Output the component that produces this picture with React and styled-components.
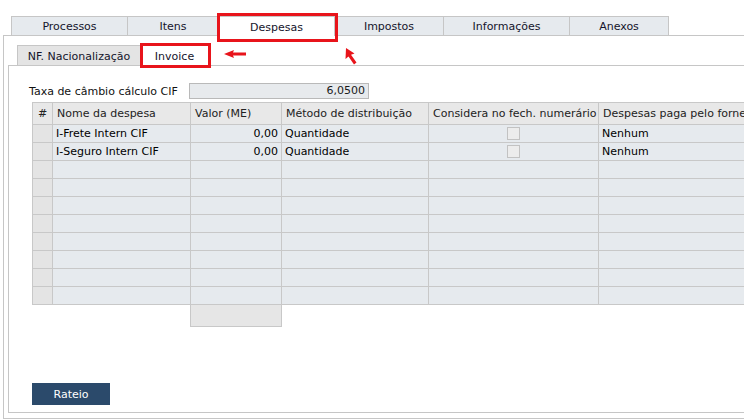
import React from "react";
import styled, { createGlobalStyle } from "styled-components";

const GlobalStyle = createGlobalStyle`
  html, body {
    margin: 0;
    padding: 0;
    background: #ffffff;
  }
  body {
    font-family: "DejaVu Sans", Verdana, sans-serif;
    font-size: 11px;
    color: #1a1a1a;
  }
`;

const MAIN_TABS = [
  { title: "Processos", width: 117 },
  { title: "Itens", width: 91 },
  { title: "Despesas", width: 116, active: true, marked: true },
  { title: "Impostos", width: 109 },
  { title: "Informações", width: 126 },
  { title: "Anexos", width: 99 },
];

const SUB_TABS = [
  { title: "NF. Nacionalização", width: 124 },
  { title: "Invoice", width: 68, active: true, marked: true },
];

const COLUMNS = [
  { key: "idx", title: "#", width: 20 },
  { key: "name", title: "Nome da despesa", width: 138 },
  { key: "value", title: "Valor (ME)", width: 91 },
  { key: "method", title: "Método de distribuição", width: 147 },
  { key: "check", title: "Considera no fech. numerário", width: 170 },
  { key: "paid", title: "Despesas paga pelo fornecedor", width: 220 },
];

const ROWS = [
  { name: "I-Frete Intern CIF", value: "0,00", method: "Quantidade", check: true, paid: "Nenhum" },
  { name: "I-Seguro Intern CIF", value: "0,00", method: "Quantidade", check: true, paid: "Nenhum" },
  {}, {}, {}, {}, {}, {}, {}, {},
];

const Page = styled.div`
  position: relative;
  width: 744px;
  height: 420px;
  overflow: hidden;
  padding-top: 16px;
  box-sizing: border-box;
`;

const TabStrip = styled.div`
  display: flex;
  padding-left: 11px;
  height: 19px;
`;

const Tab = styled.div`
  position: relative;
  box-sizing: border-box;
  width: ${(p) => p.$width}px;
  height: ${(p) => (p.$active ? 20 : 19)}px;
  display: flex;
  align-items: center;
  justify-content: center;
  padding-top: 1px;
  border-top: 1px solid #c6c6c6;
  border-right: 1px solid #c6c6c6;
  &:first-child {
    border-left: 1px solid #c6c6c6;
  }
  background: ${(p) => (p.$active ? "#ffffff" : "#e6eaee")};
  color: #14142b;
  font-size: 11px;
  z-index: ${(p) => (p.$active ? 2 : 1)};
`;

const MainMark = styled.span`
  position: absolute;
  top: -4px;
  left: -2px;
  right: -4px;
  bottom: -6px;
  border: 3px solid #e8141b;
`;

const Frame = styled.div`
  margin-left: 3px;
  height: 384px;
  box-sizing: border-box;
  border-top: 1px solid #c6c6c6;
  border-left: 1px solid #c6c6c6;
  border-bottom: 1px solid #c6c6c6;
  display: flex;
  flex-direction: column;
`;

const SubTabStrip = styled.div`
  position: relative;
  display: flex;
  margin-top: 9px;
  padding-left: 13px;
  height: 20px;
`;

const SubTab = styled.div`
  position: relative;
  box-sizing: border-box;
  width: ${(p) => p.$width}px;
  height: ${(p) => (p.$active ? 21 : 20)}px;
  display: flex;
  align-items: center;
  justify-content: center;
  padding-top: 1px;
  border-top: 1px solid #c6c6c6;
  border-right: 1px solid #c6c6c6;
  &:first-child {
    border-left: 1px solid #c6c6c6;
  }
  background: ${(p) => (p.$active ? "#ffffff" : "#e4e4e4")};
  color: #14142b;
  font-size: 11px;
  z-index: 2;
`;

const SubMark = styled.span`
  position: absolute;
  top: -3px;
  left: -1px;
  right: -3px;
  bottom: -2px;
  border: 3px solid #e8141b;
`;

const LeftArrow = styled.svg`
  position: absolute;
  left: 220px;
  top: 5px;
`;

const CursorArrow = styled.svg`
  position: absolute;
  left: 338px;
  top: 3px;
`;

const Panel = styled.div`
  margin-left: 4px;
  height: 348px;
  box-sizing: border-box;
  border-top: 1px solid #c6c6c6;
  border-left: 1px solid #c6c6c6;
  border-bottom: 1px solid #c6c6c6;
  padding-left: 23px;
  display: flex;
  flex-direction: column;
`;

const FieldRow = styled.div`
  display: flex;
  align-items: center;
  margin-top: 17px;
  margin-left: -3px;
  height: 16px;
`;

const FieldLabel = styled.span`
  width: 160px;
  font-size: 11px;
  color: #111;
`;

const FieldInput = styled.div`
  box-sizing: border-box;
  width: 180px;
  height: 16px;
  border: 1px solid #b9b9b9;
  background: #e7eaed;
  text-align: right;
  padding-right: 3px;
  line-height: 14px;
  font-size: 11px;
`;

const Grid = styled.table`
  margin-top: 3px;
  border-collapse: collapse;
  table-layout: fixed;
  width: 786px;
  font-size: 11px;
`;

const HeadCell = styled.th`
  height: 21px;
  padding: 0 4px;
  font-weight: normal;
  text-align: ${(p) => (p.$center ? "center" : "left")};
  background: #e8e8e8;
  border: 1px solid #c8c8c8;
  color: #222;
  white-space: nowrap;
  overflow: hidden;
`;

const Cell = styled.td`
  height: 17px;
  padding: 0 3px;
  text-align: ${(p) => p.$align || "left"};
  background: ${(p) => (p.$idx ? "#e4e4e4" : "#e6eaee")};
  border: 1px solid #c8c8c8;
  white-space: nowrap;
  overflow: hidden;
  color: #000;
`;

const FootCell = styled.td`
  height: 21px;
  padding: 0;
  background: ${(p) => (p.$filled ? "#e6e6e6" : "transparent")};
  border: ${(p) => (p.$filled ? "1px solid #c8c8c8" : "none")};
`;

const CheckBox = styled.span`
  display: inline-block;
  width: 13px;
  height: 13px;
  box-sizing: border-box;
  border: 1px solid #c2c2c2;
  background: #ececec;
  vertical-align: middle;
`;

const ActionButton = styled.button`
  margin-top: auto;
  margin-bottom: 7px;
  width: 78px;
  height: 22px;
  border: none;
  background: #2b4a6b;
  color: #ffffff;
  font-family: "DejaVu Sans", Verdana, sans-serif;
  font-size: 11px;
  padding: 0;
`;

function App() {
  return (
    <Page>
      <GlobalStyle />
      <TabStrip>
        {MAIN_TABS.map((tab) => (
          <Tab key={tab.title} $width={tab.width} $active={tab.active}>
            {tab.title}
            {tab.marked && <MainMark />}
          </Tab>
        ))}
      </TabStrip>
      <Frame>
        <SubTabStrip>
          {SUB_TABS.map((tab) => (
            <SubTab key={tab.title} $width={tab.width} $active={tab.active}>
              {tab.title}
              {tab.marked && <SubMark />}
            </SubTab>
          ))}
          <LeftArrow width="22" height="8" viewBox="0 0 22 8">
            <path d="M0 4 L10 0 L9 2.5 L22 2.5 L22 5.5 L9 5.5 L10 8 Z" fill="#e8141b" />
          </LeftArrow>
          <CursorArrow width="15" height="17" viewBox="0 0 15 17">
            <path d="M4 0 L3.5 11 L6.5 8.5 L12 16.5 L14.5 14.5 L9 6.8 L12.5 5.5 Z" fill="#e8141b" />
          </CursorArrow>
        </SubTabStrip>
        <Panel>
          <FieldRow>
            <FieldLabel>Taxa de câmbio cálculo CIF</FieldLabel>
            <FieldInput>6,0500</FieldInput>
          </FieldRow>
          <Grid>
            <colgroup>
              {COLUMNS.map((col) => (
                <col key={col.key} style={{ width: col.width }} />
              ))}
            </colgroup>
            <thead>
              <tr>
                {COLUMNS.map((col) => (
                  <HeadCell key={col.key} $center={col.key === "idx"}>
                    {col.title}
                  </HeadCell>
                ))}
              </tr>
            </thead>
            <tbody>
              {ROWS.map((row, index) => (
                <tr key={`row_${index}`}>
                  <Cell $idx />
                  <Cell>{row.name}</Cell>
                  <Cell $align="right">{row.value}</Cell>
                  <Cell>{row.method}</Cell>
                  <Cell $align="center">{row.check && <CheckBox />}</Cell>
                  <Cell>{row.paid}</Cell>
                </tr>
              ))}
            </tbody>
            <tfoot>
              <tr>
                <FootCell />
                <FootCell />
                <FootCell $filled />
                <FootCell />
                <FootCell />
                <FootCell />
              </tr>
            </tfoot>
          </Grid>
          <ActionButton type="button">Rateio</ActionButton>
        </Panel>
      </Frame>
    </Page>
  );
}

export default App;
